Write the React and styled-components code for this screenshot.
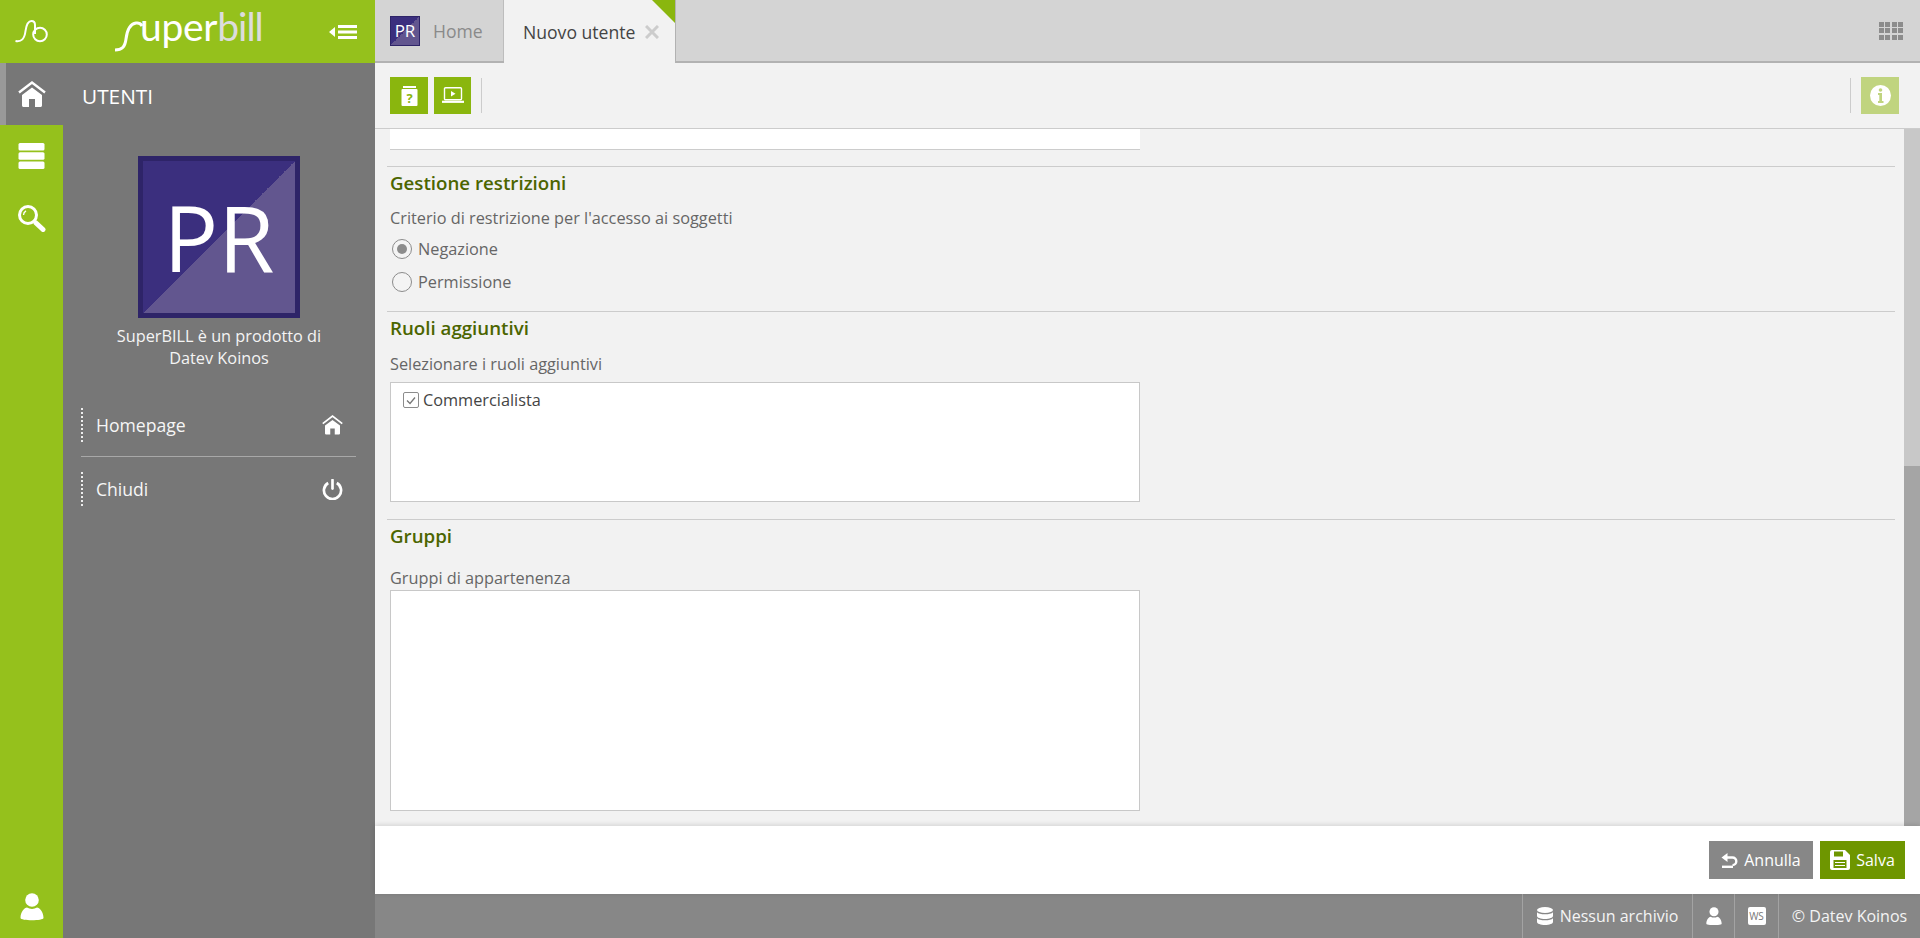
import styled, { createGlobalStyle } from "styled-components";

const GlobalStyle = createGlobalStyle`
    html, body {
        margin: 0;
        padding: 0;
        height: 100%;
        overflow: hidden;
    }
    body {
        font-family: "Open Sans", "Liberation Sans", sans-serif;
        background: #f2f2f2;
    }
`

const Page = styled.div`
    display: flex;
    width: 100%;
    height: 938px;
    overflow: hidden;
`

/* sidebar */
const Sidebar = styled.aside`
    width: 375px;
    flex: none;
    display: flex;
    flex-direction: column;
`
const BrandBar = styled.div`
    height: 63px;
    flex: none;
    display: flex;
    align-items: center;
    background: #95c11c;
    color: white;
`
const Monogram = styled.svg`
    width: 63px;
    height: 63px;
    flex: none;
`
const Brand = styled.div`
    display: flex;
    align-items: flex-start;
    width: 200px;
    height: 63px;
    flex: none;
    margin-left: 50px;
`
const Swash = styled.svg`
    width: 30px;
    height: 63px;
    flex: none;
`
const BrandText = styled.span`
    font-family: Lato, "Open Sans", sans-serif;
    font-weight: 400;
    font-size: 39px;
    line-height: 53px;
    color: ${(props) => (props.$dim ? "#dcdcdc" : "white")};
    margin-left: ${(props) => (props.$dim ? "0" : "-3px")};
    letter-spacing: ${(props) => (props.$dim ? "-1px" : "-0.3px")};
`
const Collapse = styled.svg`
    width: 28px;
    height: 16px;
    margin-left: 16px;
`
const SideBody = styled.div`
    flex: 1;
    display: flex;
    min-height: 0;
`
const Rail = styled.nav`
    width: 63px;
    flex: none;
    display: flex;
    flex-direction: column;
    background: #95c11c;
`
const RailItem = styled.div`
    height: 62px;
    display: flex;
    align-items: center;
    justify-content: center;
    box-sizing: border-box;
    background: ${(props) => (props.$active ? "#777777" : "transparent")};
    border-left: ${(props) => (props.$active ? "6px solid #999999" : "none")};
    padding-right: ${(props) => (props.$active ? "6px" : "0")};
    margin-top: ${(props) => (props.$bottom ? "auto" : "0")};
`
const Panel = styled.div`
    flex: 1;
    background: #777777;
    color: white;
    display: flex;
    flex-direction: column;
`
const PanelTitle = styled.div`
    height: 66px;
    display: flex;
    align-items: center;
    padding-left: 19px;
    font-size: 20.8px;
`
const Avatar = styled.div`
    box-sizing: border-box;
    width: ${(props) => props.$size}px;
    height: ${(props) => props.$size}px;
    flex: none;
    display: flex;
    align-items: center;
    justify-content: center;
    border: ${(props) => (props.$size > 100 ? 5 : 1)}px solid #2e2468;
    background: linear-gradient(to bottom right, #3b2f7e 50%, #62568f 50%);
    color: white;
    font-size: ${(props) => (props.$size > 100 ? "91px" : "17px")};
    line-height: 1;
`
const AvatarSlot = styled.div`
    display: flex;
    justify-content: center;
    margin-top: 27px;
`
const Caption = styled.p`
    margin: 7px 0 0;
    text-align: center;
    font-size: 16.3px;
    line-height: 22px;
    color: #f4f4f4;
    padding: 0 45px;
`
const Menu = styled.div`
    margin: 39px 19px 0 18px;
    display: flex;
    flex-direction: column;
`
const MenuItem = styled.a`
    height: 34px;
    display: flex;
    align-items: center;
    justify-content: space-between;
    border-left: 2px dotted #ededed;
    padding: 0 13px 0 13px;
    font-size: 17.6px;
    color: #f6f6f6;
`
const MenuLine = styled.div`
    height: 1px;
    background: #a8a8a8;
    margin: 14px 0 15px;
`

/* main column */
const Main = styled.main`
    flex: 1;
    min-width: 0;
    display: flex;
    flex-direction: column;
`
const TabBar = styled.div`
    height: 63px;
    flex: none;
    box-sizing: border-box;
    display: flex;
    align-items: stretch;
    background: #d4d4d4;
    border-bottom: 2px solid #b2b2b2;
    padding-right: 17px;
`
const HomeTab = styled.div`
    width: 129px;
    box-sizing: border-box;
    display: flex;
    align-items: center;
    gap: 13px;
    padding-left: 15px;
    border-right: 1px solid #bdbdbd;
    font-size: 17.6px;
    color: #8a8a8a;
`
const ActiveTab = styled.div`
    position: relative;
    width: 172px;
    height: 63px;
    box-sizing: border-box;
    display: flex;
    align-items: center;
    padding-left: 19px;
    gap: 10px;
    background: #f2f2f2;
    border-right: 1px solid #b2b2b2;
    font-size: 17.6px;
    color: #444444;
    &::after {
        content: "";
        position: absolute;
        top: 0;
        right: 0;
        border-style: solid;
        border-width: 0 23px 23px 0;
        border-color: transparent #8ab60e transparent transparent;
    }
`
const GridIcon = styled.div`
    margin-left: auto;
    align-self: center;
    display: grid;
    grid-template-columns: repeat(4, 5px);
    grid-auto-rows: 5px;
    gap: 1.5px;
    & > span {
        background: #8c8c8c;
    }
`
const Toolbar = styled.div`
    height: 66px;
    flex: none;
    box-sizing: border-box;
    display: flex;
    align-items: center;
    padding: 0 21px 0 15px;
    gap: 6px;
    background: #f2f2f2;
    border-bottom: 1px solid #cccccc;
`
const ToolButton = styled.button`
    width: ${(props) => (props.$wide ? 38 : 37)}px;
    height: 37px;
    border: 0;
    padding: 0;
    display: flex;
    align-items: center;
    justify-content: center;
    background: ${(props) => (props.$faded ? "#c0d47f" : "#8ab60e")};
`
const ToolSep = styled.div`
    width: 1px;
    height: 35px;
    background: #cccccc;
    margin: ${(props) => (props.$right ? "0 4px 0 auto" : "0 0 0 4px")};
`
const ScrollArea = styled.div`
    flex: 1;
    min-height: 0;
    display: flex;
    overflow: hidden;
`
const Form = styled.div`
    flex: 1;
    min-width: 0;
    padding: 0 9px 0 12px;
`
const CutField = styled.div`
    width: 750px;
    height: 20px;
    margin-left: 3px;
    background: white;
    border-bottom: 1px solid #cccccc;
    margin-bottom: 16px;
`
const Section = styled.section`
    border-top: 1px solid #cccccc;
    padding: 4px 0 ${(props) => props.$bottom}px 3px;
`
const SectionTitle = styled.h3`
    margin: 0;
    font-size: 18.72px;
    line-height: 24px;
    font-weight: 600;
    color: #4b6500;
`
const FieldLabel = styled.div`
    margin-top: ${(props) => props.$top}px;
    font-size: 16.3px;
    line-height: 20px;
    color: #666666;
`
const RadioGroup = styled.div`
    margin-top: 4px;
`
const RadioRow = styled.div`
    height: 33px;
    display: flex;
    align-items: center;
    gap: 6px;
    padding-left: 2px;
    font-size: 16.3px;
    color: #666666;
`
const Radio = styled.span`
    width: 18px;
    height: 18px;
    flex: none;
    border: 1px solid #8c8c8c;
    border-radius: 50%;
    display: flex;
    align-items: center;
    justify-content: center;
    background: #f4f4f4;
    &::after {
        content: "";
        width: 10px;
        height: 10px;
        border-radius: 50%;
        background: ${(props) => (props.$checked ? "#8c8c8c" : "transparent")};
    }
`
const ListBox = styled.div`
    width: 750px;
    height: ${(props) => props.$height}px;
    box-sizing: border-box;
    margin-top: ${(props) => props.$top}px;
    padding: 7px 12px;
    background: white;
    border: 1px solid #c8c8c8;
`
const CheckRow = styled.div`
    display: flex;
    align-items: center;
    gap: 4px;
    font-size: 16.3px;
    line-height: 20px;
    color: #444444;
`
const CheckBox = styled.span`
    width: 16px;
    height: 16px;
    box-sizing: border-box;
    flex: none;
    display: flex;
    align-items: center;
    justify-content: center;
    border: 1px solid #8c8c8c;
    border-radius: 2px;
`
const ScrollBar = styled.div`
    width: 16px;
    flex: none;
    display: flex;
    flex-direction: column;
    background: #c8c8c8;
`
const ScrollThumb = styled.div`
    margin-top: auto;
    height: 360px;
    background: #a5a5a5;
`
const FooterBar = styled.div`
    position: relative;
    height: 68px;
    flex: none;
    display: flex;
    align-items: center;
    justify-content: flex-end;
    gap: 7px;
    padding-right: 15px;
    background: white;
    box-shadow: 0 -1px 5px rgba(0, 0, 0, 0.14);
`
const ActionButton = styled.button`
    height: 38px;
    width: ${(props) => props.$width}px;
    border: 0;
    display: flex;
    align-items: center;
    justify-content: center;
    gap: 6px;
    padding: 0;
    font-family: inherit;
    font-size: 16px;
    color: white;
    background: ${(props) => (props.$primary ? "#6e9600" : "#878787")};
`
const StatusBar = styled.footer`
    height: 44px;
    flex: none;
    display: flex;
    justify-content: flex-end;
    align-items: stretch;
    background: #878787;
    color: #f4f4f4;
    font-size: 16px;
`
const StatusCell = styled.div`
    display: flex;
    align-items: center;
    justify-content: center;
    gap: 7px;
    width: ${(props) => props.$width}px;
    box-sizing: border-box;
    border-left: 1px solid #a3a3a3;
`
const WsBadge = styled.span`
    width: 18px;
    height: 18px;
    display: flex;
    align-items: center;
    justify-content: center;
    border-radius: 2px;
    background: white;
    color: #777777;
    font-size: 10px;
`

/* icons */
const HomeIcon = ({ size = 28 }) => (
    <svg width={size} height={size * 0.93} viewBox="0 0 28 26" fill="white">
        <path d="M1 11.500 14 1.500l13 10" fill="none" stroke="white" strokeWidth="2.400" />
        <path d="M14 6.500 24 14v10.500a1.500 1.500 0 0 1-1.500 1.500H17v-8h-6v8H5.500A1.500 1.500 0 0 1 4 24.500V14z" />
    </svg>
)
const StackIcon = () => (
    <svg width="27" height="26" viewBox="0 0 27 26" fill="white">
        <rect x="0.500" y="0" width="26" height="7.600" rx="1.500" />
        <rect x="0.500" y="9.200" width="26" height="7.600" rx="1.500" />
        <rect x="0.500" y="18.400" width="26" height="7.600" rx="1.500" />
    </svg>
)
const SearchIcon = () => (
    <svg width="29" height="28" viewBox="0 0 29 28" fill="none" stroke="white">
        <circle cx="11" cy="11" r="8.500" strokeWidth="3" />
        <path d="M6.500 11a5 5 0 0 1 2.500-4.200" strokeWidth="1.400" />
        <path d="M19 19l7 6.500" strokeWidth="5" strokeLinecap="round" />
    </svg>
)
const UserIcon = ({ size = 24 }) => (
    <svg width={size} height={size * 1.17} viewBox="0 0 24 28" fill="white">
        <circle cx="12" cy="7" r="6.800" />
        <path d="M0.500 25c0-6 4-10.500 6.500-10.500 3 1.800 7 1.800 10 0 2.500 0 6.500 4.500 6.500 10.500 0 3-23 3-23 0z" />
    </svg>
)
const PowerIcon = () => (
    <svg width="21" height="21" viewBox="0 0 22 22" fill="none" stroke="white" strokeWidth="2.800">
        <path d="M6.500 4.200a9 9 0 1 0 9 0" />
        <path d="M11 1v9" strokeLinecap="round" />
    </svg>
)
const HelpBookIcon = () => (
    <svg width="17" height="20" viewBox="0 0 17 20" fill="white">
        <rect x="2" y="0" width="13" height="2" />
        <rect x="0.500" y="3" width="16" height="17" rx="1" />
        <text x="8.500" y="16.500" textAnchor="middle" fontSize="13" fontWeight="700" fontFamily="Open Sans" fill="#8ab60e">?</text>
    </svg>
)
const LaptopIcon = () => (
    <svg width="22" height="17" viewBox="0 0 22 17" fill="none" stroke="white">
        <rect x="2.500" y="0.700" width="17" height="12" rx="1" strokeWidth="1.400" />
        <path d="M9 4l4.500 2.700L9 9.400z" fill="white" stroke="none" />
        <path d="M0 14.800h22" strokeWidth="2.200" />
    </svg>
)
const InfoIcon = () => (
    <svg width="21" height="21" viewBox="0 0 21 21">
        <circle cx="10.500" cy="10.500" r="10.500" fill="white" />
        <circle cx="10.500" cy="5" r="1.800" fill="#c0d47f" />
        <path d="M8 8h4v8h1.500v2H8v-2h1.300v-6H8z" fill="#c0d47f" />
    </svg>
)
const UndoIcon = () => (
    <svg width="17" height="15" viewBox="0 0 17 15" fill="none" stroke="white" strokeWidth="2.400">
        <path d="M0.500 4.500 6.500 0v9z" fill="white" stroke="none" />
        <path d="M5 4.500h6.500a3.800 3.800 0 0 1 0 7.600" />
        <path d="M1 13.800h11" />
    </svg>
)
const SaveIcon = () => (
    <svg width="20" height="20" viewBox="0 0 20 20" fill="white">
        <path d="M2 0h13l5 5v13a2 2 0 0 1-2 2H2a2 2 0 0 1-2-2V2a2 2 0 0 1 2-2z" />
        <rect x="4" y="1.500" width="9" height="5" fill="#6e9600" />
        <rect x="3.500" y="10" width="13" height="8" fill="#6e9600" />
        <path d="M5 12.500h10M5 15.500h10" stroke="white" strokeWidth="1.200" />
    </svg>
)
const DbIcon = () => (
    <svg width="16" height="18" viewBox="0 0 16 18" fill="white">
        <ellipse cx="8" cy="3" rx="8" ry="3" />
        <path d="M0 5.200c1.500 1.500 4 2 8 2s6.500-.5 8-2V9c0 1.600-3.600 3-8 3S0 10.600 0 9z" />
        <path d="M0 11.200c1.500 1.500 4 2 8 2s6.500-.5 8-2V15c0 1.600-3.600 3-8 3s-8-1.400-8-3z" />
    </svg>
)

const App = () => {
    return (
        <Page>
            <GlobalStyle />
            <Sidebar>
                <BrandBar>
                    <Monogram viewBox="0 0 63 63" fill="none" stroke="white" strokeWidth="2">
                        <path d="M15.500 41c6 1 9-2 10-10 1-7 2.500-10 6-10 2.500 0 3.500 2 3.500 4v9" />
                        <circle cx="40" cy="34.500" r="6.800" />
                    </Monogram>
                    <Brand>
                        <Swash viewBox="0 0 30 63" fill="none" stroke="white" strokeWidth="3">
                            <path d="M2 50c7 0 10-3 11-11 1-8 3-15 10-16 3-.4 5 1 6 3" />
                        </Swash>
                        <BrandText>uper</BrandText>
                        <BrandText $dim>bill</BrandText>
                    </Brand>
                    <Collapse viewBox="0 0 28 16" fill="white">
                        <path d="M0 8l6-5v10z" />
                        <rect x="9" y="1" width="19" height="3" />
                        <rect x="9" y="6.500" width="19" height="3" />
                        <rect x="9" y="12" width="19" height="3" />
                    </Collapse>
                </BrandBar>
                <SideBody>
                    <Rail>
                        <RailItem $active><HomeIcon /></RailItem>
                        <RailItem><StackIcon /></RailItem>
                        <RailItem><SearchIcon /></RailItem>
                        <RailItem $bottom><UserIcon /></RailItem>
                    </Rail>
                    <Panel>
                        <PanelTitle>UTENTI</PanelTitle>
                        <AvatarSlot>
                            <Avatar $size={162}>PR</Avatar>
                        </AvatarSlot>
                        <Caption>SuperBILL è un prodotto di Datev Koinos</Caption>
                        <Menu>
                            <MenuItem>Homepage <HomeIcon size={21} /></MenuItem>
                            <MenuLine />
                            <MenuItem>Chiudi <PowerIcon /></MenuItem>
                        </Menu>
                    </Panel>
                </SideBody>
            </Sidebar>

            <Main>
                <TabBar>
                    <HomeTab>
                        <Avatar $size={30}>PR</Avatar>
                        Home
                    </HomeTab>
                    <ActiveTab>
                        Nuovo utente
                        <svg width="14" height="14" viewBox="0 0 14 14" stroke="#cccccc" strokeWidth="3">
                            <path d="M1 1l12 12M13 1L1 13" />
                        </svg>
                    </ActiveTab>
                    <GridIcon>
                        {Array.from({ length: 12 }, (_, i) => <span key={i} />)}
                    </GridIcon>
                </TabBar>
                <Toolbar>
                    <ToolButton $wide><HelpBookIcon /></ToolButton>
                    <ToolButton><LaptopIcon /></ToolButton>
                    <ToolSep />
                    <ToolSep $right />
                    <ToolButton $wide $faded><InfoIcon /></ToolButton>
                </Toolbar>
                <ScrollArea>
                    <Form>
                        <CutField />
                        <Section $bottom={13}>
                            <SectionTitle>Gestione restrizioni</SectionTitle>
                            <FieldLabel $top={13}>Criterio di restrizione per l'accesso ai soggetti</FieldLabel>
                            <RadioGroup>
                                <RadioRow><Radio $checked />Negazione</RadioRow>
                                <RadioRow><Radio />Permissione</RadioRow>
                            </RadioGroup>
                        </Section>
                        <Section $bottom={17}>
                            <SectionTitle>Ruoli aggiuntivi</SectionTitle>
                            <FieldLabel $top={14}>Selezionare i ruoli aggiuntivi</FieldLabel>
                            <ListBox $top={8} $height={120}>
                                <CheckRow>
                                    <CheckBox>
                                        <svg width="10" height="9" viewBox="0 0 10 9" fill="none" stroke="#777777" strokeWidth="1.300">
                                            <path d="M1 4.500l3 3 5-6" />
                                        </svg>
                                    </CheckBox>
                                    Commercialista
                                </CheckRow>
                            </ListBox>
                        </Section>
                        <Section $bottom={0}>
                            <SectionTitle>Gruppi</SectionTitle>
                            <FieldLabel $top={20}>Gruppi di appartenenza</FieldLabel>
                            <ListBox $top={2} $height={221} />
                        </Section>
                    </Form>
                    <ScrollBar><ScrollThumb /></ScrollBar>
                </ScrollArea>
                <FooterBar>
                    <ActionButton $width={104}><UndoIcon />Annulla</ActionButton>
                    <ActionButton $primary $width={85}><SaveIcon />Salva</ActionButton>
                </FooterBar>
                <StatusBar>
                    <StatusCell $width={170}><DbIcon />Nessun archivio</StatusCell>
                    <StatusCell $width={42}><UserIcon size={16} /></StatusCell>
                    <StatusCell $width={44}><WsBadge>WS</WsBadge></StatusCell>
                    <StatusCell $width={142}>© Datev Koinos</StatusCell>
                </StatusBar>
            </Main>
        </Page>
    )
}

export default App
